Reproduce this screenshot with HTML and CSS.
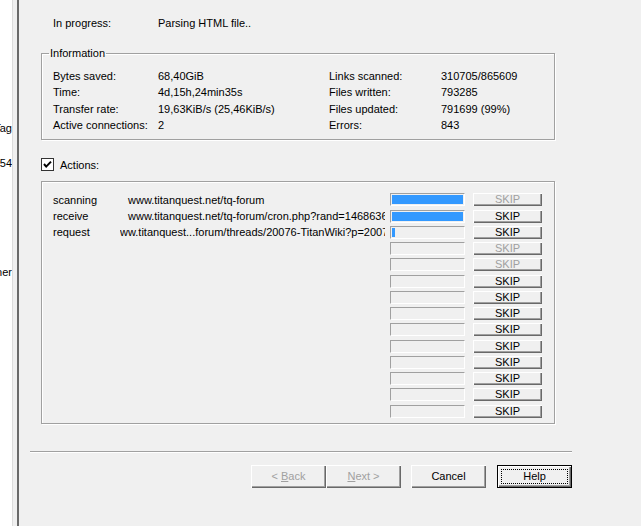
FILE: index.html
```html
<!DOCTYPE html>
<html lang="en">

<head>
    <meta charset="UTF-8">
    <meta name="viewport" content="width=device-width, initial-scale=1.0">
    <title>Download progress</title>
    <link rel="stylesheet" href="styles.css">
</head>

<body>
    <div class="behind">
        <div class="peek peek-first">Tag</div>
        <div class="peek peek-second">554</div>
        <div class="peek peek-third">ner</div>
    </div>
    <div class="edge"></div>

    <div class="dialog">
        <div class="page">
            <div class="status">
                <span class="status-label">In progress:</span>
                <span>Parsing HTML file..</span>
            </div>

            <fieldset class="info">
                <legend>Information</legend>
                <div class="info-grid">
                    <span>Bytes saved:</span><span>68,40GiB</span>
                    <span>Links scanned:</span><span>310705/865609</span>

                    <span>Time:</span><span>4d,15h,24min35s</span>
                    <span>Files written:</span><span>793285</span>

                    <span>Transfer rate:</span><span>19,63KiB/s (25,46KiB/s)</span>
                    <span>Files updated:</span><span>791699 (99%)</span>

                    <span>Active connections:</span><span>2</span>
                    <span>Errors:</span><span>843</span>
                </div>
            </fieldset>

            <div class="check-row">
                <span class="checkbox">
                    <svg width="11" height="11" viewBox="0 0 11 11">
                        <polyline points="2,5 4.2,7.6 9,2.6" fill="none" stroke="#000" stroke-width="2" />
                    </svg>
                </span>
                <span class="check-label">Actions:</span>
            </div>

            <div class="actions">
                <div class="act-row">
                    <span class="act-name">scanning</span>
                    <span class="act-url"><span class="url-pad">www.titanquest.net/tq-forum</span></span>
                    <span class="bar"><span class="fill" style="width: 100%"></span></span>
                    <span class="skip disabled">SKIP</span>
                </div>
                <div class="act-row">
                    <span class="act-name">receive</span>
                    <span class="act-url"><span class="url-pad">www.titanquest.net/tq-forum/cron.php?rand=1468636864</span></span>
                    <span class="bar"><span class="fill" style="width: 100%"></span></span>
                    <span class="skip">SKIP</span>
                </div>
                <div class="act-row">
                    <span class="act-name">request</span>
                    <span class="act-url">ww.titanquest...forum/threads/20076-TitanWiki?p=20076</span>
                    <span class="bar"><span class="fill" style="width: 4%"></span></span>
                    <span class="skip">SKIP</span>
                </div>
                <div class="act-row"><span class="act-name"></span><span class="act-url"></span><span class="bar"></span><span class="skip disabled">SKIP</span></div>
                <div class="act-row"><span class="act-name"></span><span class="act-url"></span><span class="bar"></span><span class="skip disabled">SKIP</span></div>
                <div class="act-row"><span class="act-name"></span><span class="act-url"></span><span class="bar"></span><span class="skip">SKIP</span></div>
                <div class="act-row"><span class="act-name"></span><span class="act-url"></span><span class="bar"></span><span class="skip">SKIP</span></div>
                <div class="act-row"><span class="act-name"></span><span class="act-url"></span><span class="bar"></span><span class="skip">SKIP</span></div>
                <div class="act-row"><span class="act-name"></span><span class="act-url"></span><span class="bar"></span><span class="skip">SKIP</span></div>
                <div class="act-row"><span class="act-name"></span><span class="act-url"></span><span class="bar"></span><span class="skip">SKIP</span></div>
                <div class="act-row"><span class="act-name"></span><span class="act-url"></span><span class="bar"></span><span class="skip">SKIP</span></div>
                <div class="act-row"><span class="act-name"></span><span class="act-url"></span><span class="bar"></span><span class="skip">SKIP</span></div>
                <div class="act-row"><span class="act-name"></span><span class="act-url"></span><span class="bar"></span><span class="skip">SKIP</span></div>
                <div class="act-row"><span class="act-name"></span><span class="act-url"></span><span class="bar"></span><span class="skip">SKIP</span></div>
            </div>
        </div>

        <div class="footer">
            <div class="separator"></div>
            <div class="buttons">
                <button class="btn disabled">&lt; <u>B</u>ack</button>
                <button class="btn disabled"><u>N</u>ext &gt;</button>
                <button class="btn btn-cancel">Cancel</button>
                <button class="btn btn-default"><span class="focus">Help</span></button>
            </div>
        </div>
    </div>
</body>

</html>
```

FILE: styles.css
```css
* {
    box-sizing: border-box;
}

:root {
    --face: #f0f0f0;
    --shadow: #a0a0a0;
    --dark: #696969;
    --light: #ffffff;
    --blue: #3399ff;
    --textColor: #000000;
    --disabled: #a0a0a0;
}

body {
    margin: 0;
    height: 526px;
    overflow: hidden;
    display: flex;
    background: #ffffff;
    color: var(--textColor);
    font-family: "Liberation Sans", Arial, sans-serif;
    font-size: 11px;
    line-height: 13px;
}

/* window lying behind the dialog */
.behind {
    width: 12px;
    flex-shrink: 0;
    background: #ffffff;
    overflow: hidden;
    padding-top: 122px;
}

.peek {
    white-space: nowrap;
    direction: rtl;
    text-align: right;
}

.peek-second {
    margin-top: 22px;
}

.peek-third {
    margin-top: 96px;
}

.edge {
    width: 5px;
    flex-shrink: 0;
    background: var(--face);
    border-left: 1px solid #dcdcdc;
}

.dialog {
    flex: 1;
    background: var(--face);
    border-left: 2px solid #6a6a6a;
    padding: 15px 0 0 11px;
}

.page {
    padding-left: 11px;
}

.status {
    display: flex;
    padding: 2px 0 0 12px;
}

.status-label {
    width: 105px;
}

/* Information group */
.info {
    width: 514px;
    margin: 16px 0 0 0;
    padding: 7.5px 11px 5.5px 11px;
    border: 1px solid var(--shadow);
    box-shadow: 1px 1px 0 var(--light), inset 1px 1px 0 var(--light);
}

.info legend {
    margin-left: -4px;
    padding: 1px 1px 0 1px;
    line-height: 13px;
}

.info-grid {
    display: grid;
    grid-template-columns: 105px 171px 112px auto;
    line-height: 16.6px;
}

.check-row {
    display: flex;
    align-items: center;
    gap: 6px;
    margin-top: 18px;
    height: 13px;
}

.check-label {
    padding-top: 1px;
}

.checkbox {
    width: 13px;
    height: 13px;
    background: #ffffff;
    border: 1px solid #333333;
    display: flex;
}

/* Actions list */
.actions {
    width: 514px;
    margin-top: 10px;
    padding: 11px 11px 5px 11px;
    border: 1px solid var(--shadow);
    box-shadow: 1px 1px 0 var(--light), inset 1px 1px 0 var(--light);
    display: flex;
    flex-direction: column;
    gap: 3.25px;
}

.act-row {
    display: flex;
    align-items: center;
    height: 13px;
}

.act-name {
    width: 67px;
    flex-shrink: 0;
    padding-top: 1px;
}

.act-url {
    width: 265px;
    flex-shrink: 0;
    overflow: hidden;
    white-space: nowrap;
    padding-top: 1px;
}

.url-pad {
    padding-left: 8px;
}

.bar {
    width: 75px;
    height: 13px;
    margin-left: 5px;
    flex-shrink: 0;
    padding: 1px;
    border: 1px solid;
    border-color: var(--shadow) var(--light) var(--light) var(--shadow);
    display: flex;
}

.fill {
    height: 100%;
    background: var(--blue);
}

.skip {
    width: 69px;
    height: 13px;
    margin-left: 8px;
    flex-shrink: 0;
    background: var(--face);
    box-shadow: inset 1px 1px 0 var(--light), inset -1px -1px 0 var(--dark), inset -2px -2px 0 var(--shadow);
    text-align: center;
    font-size: 11px;
    line-height: 13px;
}

.skip.disabled {
    color: var(--disabled);
}

/* bottom buttons */
.footer {
    width: 542px;
    margin-top: 27px;
}

.separator {
    height: 2px;
    border-top: 1px solid var(--shadow);
    border-bottom: 1px solid var(--light);
}

.buttons {
    display: flex;
    justify-content: flex-end;
    margin-top: 12px;
}

.btn {
    width: 75px;
    height: 23px;
    padding: 0;
    border: none;
    background: var(--face);
    box-shadow: inset 1px 1px 0 var(--light), inset -1px -1px 0 var(--dark), inset -2px -2px 0 var(--shadow);
    font-family: "Liberation Sans", Arial, sans-serif;
    font-size: 11px;
    color: var(--textColor);
}

.btn.disabled {
    color: var(--disabled);
}

.btn-cancel {
    margin-left: 10px;
}

.btn-default {
    margin-left: 11px;
    padding: 4px;
    box-shadow: inset 0 0 0 1px #000000, inset 2px 2px 0 var(--light), inset -2px -2px 0 var(--dark), inset -3px -3px 0 var(--shadow);
}

.focus {
    display: block;
    height: 100%;
    border: 1px dotted #000000;
    line-height: 13px;
}
```
